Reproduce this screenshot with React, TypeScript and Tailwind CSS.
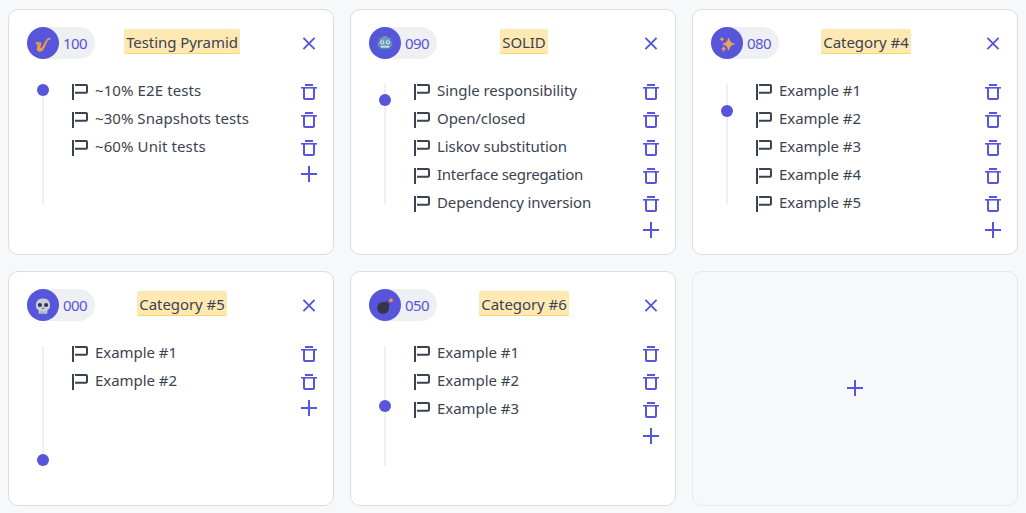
import type { ReactNode } from "react";

type Item = { text: string; tracking?: string };

type Category = {
  title: string;
  score: number;
  icon: ReactNode;
  items: Item[];
};

const Saxophone = () => (
  <svg viewBox="0 0 18 18" className="h-[18px] w-[18px]" fill="none">
    <path d="M16.6 3.6 14.2 3.9Q13.4 4.3 12.9 5.5L9.3 13.2" stroke="#e0a06a" strokeWidth="1.6" strokeLinejoin="round" />
    <path d="M13.4 6 10 13.6Q8.5 17 5.6 16.8 2.6 16.4 2.8 13.3L3.5 10.6Q2.8 9 1.2 8.3 1.4 7 4.3 7 7.5 7 7.5 8.2L6.4 12.2Q6.6 13.6 7.9 12.6L12 5.2Z" fill="#e59a4c" />
    <path d="M1.6 8Q4.3 9.3 7.2 8.2M9.2 9.3 11 10.4M10.7 7.1 12.3 8" stroke="#c58e63" strokeWidth=".8" />
  </svg>
);

const Robot = () => (
  <svg viewBox="0 0 18 18" className="h-[18px] w-[18px]">
    <path d="M6 2.8Q6.2 1.1 9 1.1T12 2.8Z" fill="#e98b2f" />
    <path d="M1.7 6.5H3.5V11.5H1.7ZM14.5 6.5H16.3V11.5H14.5Z" fill="#9f7f92" />
    <path d="M3.4 3Q9 2 14.6 3L14.9 12H3.1Z" fill="#4aa9d2" />
    <path d="M2.8 11.5H15.2V13.8Q9 15 2.8 13.8Z" fill="#378fbd" />
    <circle cx="6.1" cy="7.2" r="2" fill="#f3dfe6" />
    <circle cx="11.9" cy="7.2" r="2" fill="#f3dfe6" />
    <circle cx="6.1" cy="7.2" r=".9" fill="#d34055" />
    <circle cx="11.9" cy="7.2" r=".9" fill="#d34055" />
    <path d="M9 8 9.9 9.7H8.1Z" fill="#d98352" />
    <rect x="4.8" y="10.7" width="8.4" height="2" rx=".5" fill="#d6e5ed" />
    <path d="M7 10.7V12.7M9 10.7V12.7M11 10.7V12.7" stroke="#83aabd" strokeWidth=".5" />
  </svg>
);

const Sparkles = () => (
  <svg viewBox="0 0 18 18" className="h-[18px] w-[18px]" fill="#eca45b" stroke="#eca45b" strokeLinejoin="round">
    <path d="M10.6 3Q11.6 8.2 16.5 9.1 11.6 10 10.6 15.2 9.6 10 4.7 9.1 9.6 8.2 10.6 3Z" strokeWidth=".8" />
    <path d="M4 2.3Q4.3 4 6 4.3 4.3 4.6 4 6.3 3.7 4.6 2 4.3 3.7 4 4 2.3ZM5.6 11.4Q5.9 13.5 7.7 13.9 5.9 14.3 5.6 16.4 5.3 14.3 3.5 13.9 5.3 13.5 5.6 11.4Z" strokeWidth=".6" />
  </svg>
);

const Skull = () => (
  <svg viewBox="0 0 18 18" className="h-[18px] w-[18px]">
    <path d="M9 1.4C4.5 1.4 1.9 4.1 1.9 8Q1.9 11 3.2 12.2 4.8 12.6 4.7 14V16.2Q5.8 17.4 7 16.5 8 17.2 9 16.5 10 17.2 11 16.5 12.2 17.4 13.3 16.2V14Q13.2 12.6 14.8 12.2 16.1 11 16.1 8C16.1 4.1 13.5 1.4 9 1.4Z" fill="#c9ccdc" />
    <circle cx="5.9" cy="8" r="2.1" fill="#343648" />
    <circle cx="12.1" cy="8" r="2.1" fill="#343648" />
    <path d="M9 10.2 10.2 12H7.8Z" fill="#55586b" />
    <path d="M7 14V16.5M9 14V16.5M11 14V16.5" stroke="#83869a" strokeWidth=".6" />
  </svg>
);

const Bomb = () => (
  <svg viewBox="0 0 18 18" className="h-[18px] w-[18px]">
    <circle cx="7.1" cy="11.1" r="6" fill="#353748" />
    <path d="m8.8 5.2 2-1.2 3 3.3-1.6 2.2Z" fill="#353748" />
    <path d="m12.2 5.6 2-2" stroke="#9a7777" strokeWidth="1" />
    <circle cx="15" cy="3.2" r="2" fill="#e38745" />
    <circle cx="15" cy="3.2" r=".8" fill="#f3c078" />
  </svg>
);

const Flag = () => (
  <svg viewBox="0 0 16 16" className="h-4 w-4 shrink-0" fill="none" stroke="#3b4351" strokeWidth="2">
    <path d="M1 0V16" />
    <path d="M3 1H14Q15 1 15 2V7.7Q15 8.7 14 8.7H3" />
  </svg>
);

const Trash = () => (
  <svg viewBox="0 0 16 16" className="h-4 w-4" fill="none" stroke="#5755d9" strokeWidth="2">
    <path d="M4 1H12" />
    <path d="M0 3.8H16" strokeWidth="1.6" />
    <path d="M3 4V14Q3 15 4 15H12Q13 15 13 14V4" />
  </svg>
);

const Plus = () => (
  <svg viewBox="0 0 16 16" className="h-4 w-4" stroke="#5755d9" strokeWidth="2">
    <path d="M8 0V16M0 8H16" />
  </svg>
);

const Cross = () => (
  <svg viewBox="0 0 16 16" className="h-4 w-4" stroke="#5755d9" strokeWidth="1.9">
    <path d="m2.4 2.9 11.2 11.2M13.6 2.9 2.4 14.1" />
  </svg>
);

const examples = (count: number): Item[] => Array.from({ length: count }, (_, i) => ({ text: `Example #${i + 1}` }));

const categories: Category[] = [
  {
    title: "Testing Pyramid",
    score: 100,
    icon: <Saxophone />,
    items: [
      { text: "~10% E2E tests", tracking: "tracking-[0.1px]" },
      { text: "~30% Snapshots tests", tracking: "tracking-[0.05px]" },
      { text: "~60% Unit tests", tracking: "tracking-[0.1px]" },
    ],
  },
  {
    title: "SOLID",
    score: 90,
    icon: <Robot />,
    items: [
      { text: "Single responsibility", tracking: "tracking-[-0.05px]" },
      { text: "Open/closed", tracking: "tracking-[-0.08px]" },
      { text: "Liskov substitution", tracking: "tracking-[-0.09px]" },
      { text: "Interface segregation", tracking: "tracking-[-0.29px]" },
      { text: "Dependency inversion", tracking: "tracking-[-0.14px]" },
    ],
  },
  { title: "Category #4", score: 80, icon: <Sparkles />, items: examples(5) },
  { title: "Category #5", score: 0, icon: <Skull />, items: examples(2) },
  { title: "Category #6", score: 50, icon: <Bomb />, items: examples(3) },
];

function Slider({ score }: { score: number }) {
  return (
    <div className="relative mt-[2px] ml-[10px] h-[120px] w-3 shrink-0">
      <div className="mx-auto h-full w-[2px] bg-[#eef0f3]" />
      <div
        className="absolute left-0 h-3 w-3 rounded-full bg-[#5755d9]"
        style={{ top: Math.floor(((100 - score) * 108) / 100) }}
      />
    </div>
  );
}

function Card({ category }: { category: Category }) {
  return (
    <section className="rounded-[10px] border border-[#dadee4] bg-white pt-[17px] pr-4 pl-[18px]">
      <header className="flex h-8 items-center">
        <div className="flex h-8 w-[68px] items-center rounded-full bg-[#eef0f3] text-[15px] tracking-[-0.6px] text-[#5755d9]">
          <div className="mr-1 flex h-8 w-8 shrink-0 items-center justify-center rounded-full bg-[#5755d9] pt-[2px]">
            {category.icon}
          </div>
          <span className="pt-px">{String(category.score).padStart(3, "0")}</span>
        </div>
        <div className="flex flex-1 justify-center pr-[32px]">
          <h2 className="-mt-[3px] h-[25px] rounded-[2px] border-b border-[#ffd367] bg-[#ffe9b3] px-[2px] text-[15px] leading-[26px] tracking-[-0.07px] whitespace-nowrap">
            {category.title}
          </h2>
        </div>
        <Cross />
      </header>
      <div className="mt-[23px] flex">
        <Slider score={category.score} />
        <div className="ml-[23px] flex-1">
          <ul>
            {category.items.map(({ text, tracking = "tracking-[-0.04px]" }) => (
              <li key={text} className="flex h-7 items-start">
                <div className="mt-[2px] mr-[7px]"><Flag /></div>
                <span className={`flex-1 text-[15px] leading-4 whitespace-nowrap ${tracking}`}>{text}</span>
                <div className="mt-[2px]"><Trash /></div>
              </li>
            ))}
          </ul>
          <div className="flex justify-end"><Plus /></div>
        </div>
      </div>
    </section>
  );
}

export default function App() {
  return (
    <main className="grid h-[513px] w-[1026px] grid-cols-3 grid-rows-[246px_235px] gap-4 bg-[#f7f8f9] px-2 pt-[9px] font-['Noto_Sans',sans-serif] text-[#3b4351]">
      {categories.map((category) => (
        <Card key={category.title} category={category} />
      ))}
      <section className="flex items-center justify-center rounded-[10px] border border-[#e5e5ff] pb-px">
        <Plus />
      </section>
    </main>
  );
}
